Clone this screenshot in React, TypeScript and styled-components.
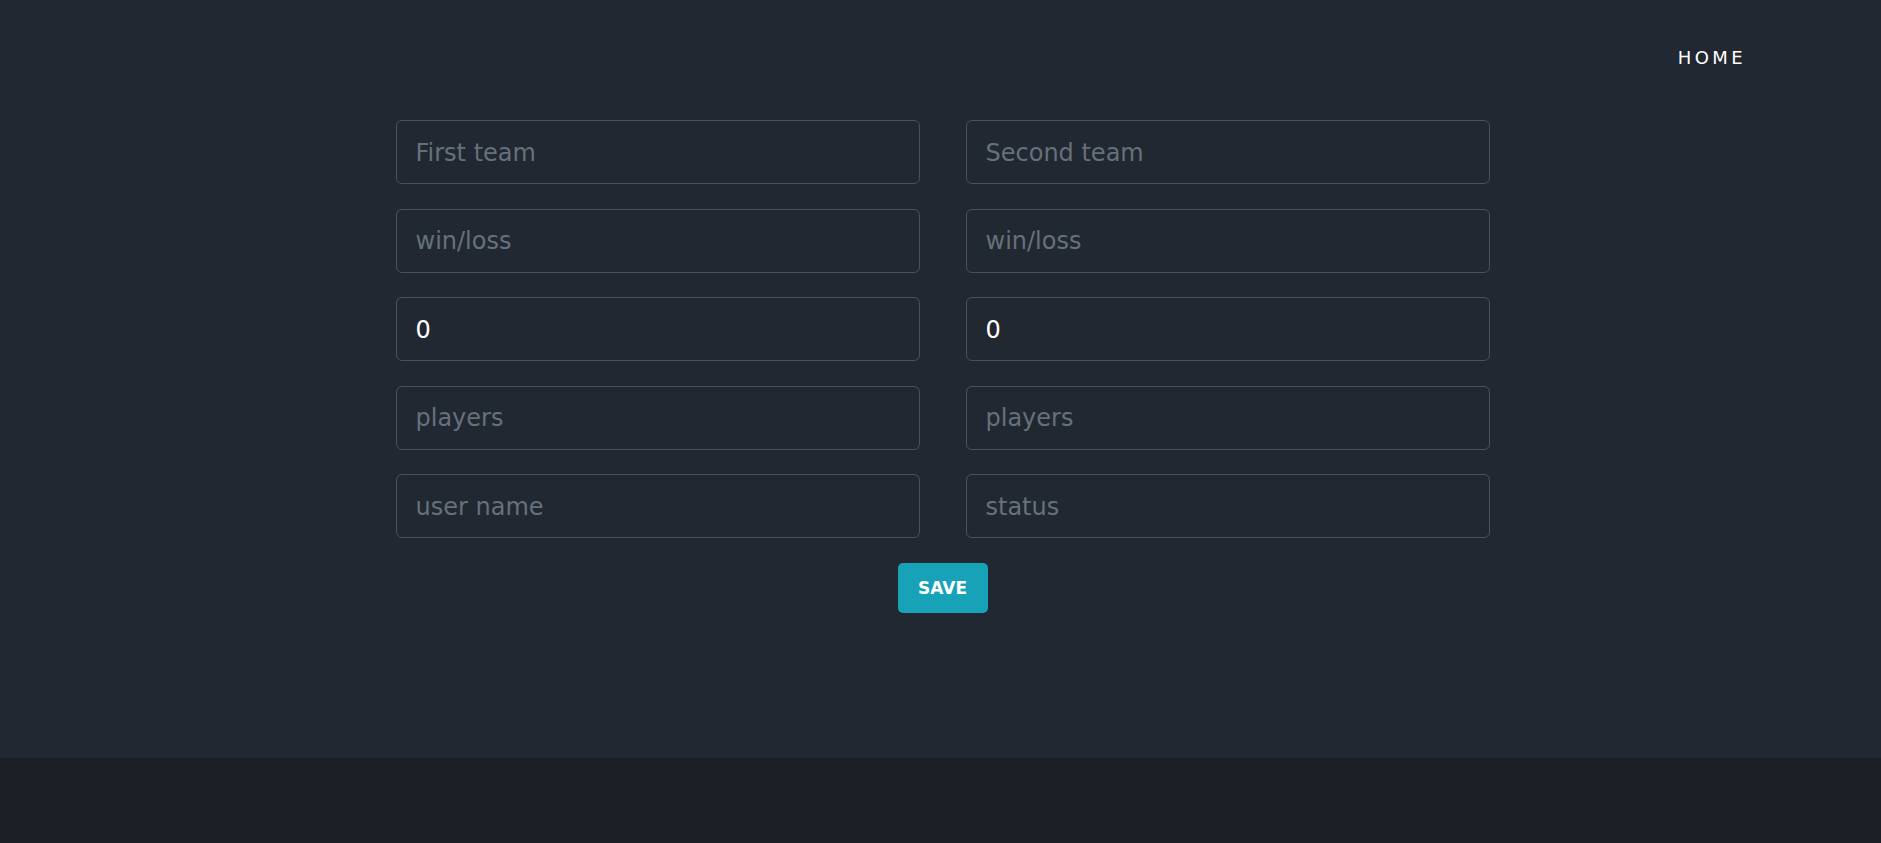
import React from "react";
import styled, { createGlobalStyle } from "styled-components";

const GlobalStyle = createGlobalStyle`
  html, body { margin: 0; padding: 0; }
  body {
    background: #1c1f26;
    font-family: "DejaVu Sans", "Liberation Sans", sans-serif;
  }
  * { box-sizing: border-box; }
`;

const Page = styled.div`
  min-height: 843px;
  display: flex;
  flex-direction: column;
`;

const Main = styled.main`
  height: 758px;
  background: #222831;
  display: flex;
  flex-direction: column;
`;

const Nav = styled.nav`
  display: flex;
  justify-content: flex-end;
  padding: 47px 135px 0 0;
  height: 120px;
`;

const NavLink = styled.a`
  color: #ffffff;
  font-size: 18px;
  letter-spacing: 3.4px;
  text-decoration: none;
  line-height: 22px;
`;

const Form = styled.form`
  width: 1094px;
  margin: 0 auto;
  display: flex;
  flex-direction: column;
  align-items: center;
  gap: 25px;
  transform: translateX(2px);
`;

const Grid = styled.div`
  width: 100%;
  display: grid;
  grid-template-columns: 1fr 1fr;
  column-gap: 46px;
  row-gap: 24.5px;
`;

const Input = styled.input`
  width: 100%;
  height: 64px;
  background: transparent;
  border: 1px solid #4c5059;
  border-radius: 6px;
  padding: 1px 19px 0;
  color: #ffffff;
  font-family: "DejaVu Sans", sans-serif;
  font-size: 24px;
  outline: none;
  &::placeholder {
    color: #66707c;
    opacity: 1;
  }
`;

const SaveButton = styled.button`
  width: 90px;
  height: 50px;
  border: none;
  border-radius: 5px;
  background: #17a2b8;
  color: #ffffff;
  font-family: "DejaVu Sans", sans-serif;
  font-weight: 700;
  font-size: 17px;
  cursor: pointer;
`;

const Footer = styled.footer`
  flex: 1;
  background: #1c1f26;
`;

const fields: { left: [string, string]; right: [string, string] }[] = [
  { left: ["First team", ""], right: ["Second team", ""] },
  { left: ["win/loss", ""], right: ["win/loss", ""] },
  { left: ["", "0"], right: ["", "0"] },
  { left: ["players", ""], right: ["players", ""] },
  { left: ["user name", ""], right: ["status", ""] },
];

export default function App() {
  return (
    <Page>
      <GlobalStyle />
      <Main>
        <Nav>
          <NavLink href="#">HOME</NavLink>
        </Nav>
        <Form onSubmit={(e) => e.preventDefault()}>
          <Grid>
            {fields.map((row, i) => (
              <React.Fragment key={i}>
                <Input placeholder={row.left[0]} defaultValue={row.left[1]} />
                <Input placeholder={row.right[0]} defaultValue={row.right[1]} />
              </React.Fragment>
            ))}
          </Grid>
          <SaveButton type="submit">SAVE</SaveButton>
        </Form>
      </Main>
      <Footer />
    </Page>
  );
}
